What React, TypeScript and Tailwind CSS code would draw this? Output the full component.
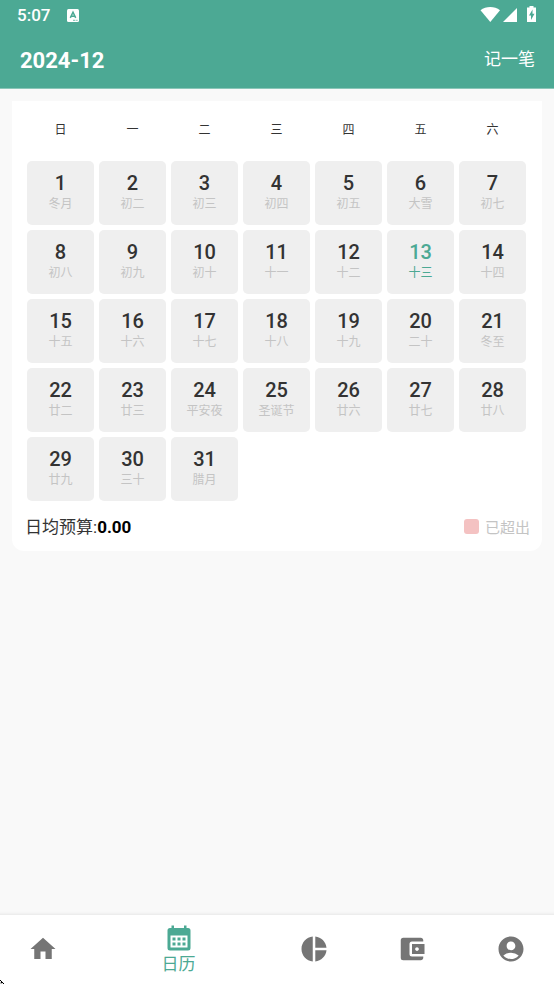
import React from 'react'
import {
  MdAccountBalanceWallet,
  MdAccountCircle,
  MdHome,
  MdPieChart,
} from 'react-icons/md'

const weekdays = ['日', '一', '二', '三', '四', '五', '六']

// Lunar label or holiday for each day of the month
const lunarLabels = [
  '冬月', '初二', '初三', '初四', '初五', '大雪', '初七',
  '初八', '初九', '初十', '十一', '十二', '十三', '十四',
  '十五', '十六', '十七', '十八', '十九', '二十', '冬至',
  '廿二', '廿三', '平安夜', '圣诞节', '廿六', '廿七', '廿八',
  '廿九', '三十', '腊月',
]

const TODAY = 13

const CalendarIcon: React.FC<{ className?: string }> = ({ className }) => (
  <svg className={className} viewBox="0 0 30 30" fill="currentColor" aria-hidden="true">
    <path
      fillRule="evenodd"
      d="M7.500 2.500h2.500V5h10V2.500h2.500V5h1.500a2.500 2.500 0 0 1 2.500 2.500V25a2.500 2.500 0 0 1-2.500 2.500H6A2.500 2.500 0 0 1 3.500 25V7.500A2.500 2.500 0 0 1 6 5h1.500zM6.500 12.500v12h17v-12z"
    />
    <path d="M8.500 14.500h3v3h-3zM13.500 14.500h3v3h-3zM18.500 14.500h3v3h-3zM8.500 19.500h3v3h-3zM13.500 19.500h3v3h-3zM18.500 19.500h3v3h-3z" />
  </svg>
)

const tabs = [
  { name: '首页', icon: MdHome },
  { name: '日历', icon: CalendarIcon },
  { name: '统计', icon: MdPieChart },
  { name: '资产', icon: MdAccountBalanceWallet },
  { name: '我的', icon: MdAccountCircle },
]

const StatusBar: React.FC = () => (
  <div className="flex h-[30px] items-center pl-[17px] pr-[17px]">
    <span className="text-[17px] font-medium leading-[30px]">5:07</span>
    <svg className="ml-[17px] h-[13px] w-3" viewBox="0 0 12 13" aria-hidden="true">
      <rect width="12" height="13" rx="1.5" fill="#fff" />
      <path d="M3.3 8.8 6 3.2l2.7 5.6M4.3 7.2h3.4" fill="none" stroke="#4ca994" strokeWidth="1.5" />
      <path d="M6 11.3h2.4M9.2 11.3h1.4" stroke="#4ca994" strokeWidth="0.8" />
    </svg>
    <svg className="mb-0.5 ml-auto h-4 w-[57px]" viewBox="0 0 57 16" fill="#fff" aria-hidden="true">
      <path d="M0.5 4.2C6-.2 14.500-.2 20 4.200L10.300 16z" />
      <path d="M37 2v14H23z" />
      <path d="M48 1.500h1.500V0h4v1.500H56V16h-9V1.500z" />
      <path d="M52.500 3.500 49 9.500h2v4.500l3.500-6.200h-2z" fill="#4ca994" />
    </svg>
  </div>
)

interface DayCellProps {
  day: number
  label: string
}

const DayCell: React.FC<DayCellProps> = ({ day, label }) => {
  const isToday = day === TODAY

  return (
    <button
      type="button"
      className={`flex h-16 flex-col items-center rounded-[5px] bg-[#efefef] pt-3 ${
        isToday ? 'text-[#4ca994]' : 'text-[#333333]'
      }`}
    >
      <span className="text-xl font-medium leading-5">{day}</span>
      <span className={`text-xs leading-[22px] ${isToday ? '' : 'text-[#c4c4c4]'}`}>{label}</span>
    </button>
  )
}

export default function App() {
  return (
    <div className="flex min-h-screen flex-col overflow-hidden bg-[#f9f9f9] font-[Roboto,'Noto_Sans_CJK_SC',sans-serif]">
      <header className="border-b border-[#8ac6b8] bg-[#4ca994] text-white">
        <StatusBar />
        <div className="flex h-[58px] items-center justify-between pl-5 pr-[19px] pt-0.5">
          <h1 className="text-[22px] font-bold">2024-12</h1>
          <button type="button" className="text-[17px]">
            记一笔
          </button>
        </div>
      </header>

      <main className="flex-1 px-3 pt-3">
        <section className="rounded-b-xl bg-white pl-[15px] pr-4">
          <div className="grid h-[60px] grid-cols-7 gap-[5px] pt-[19px] text-center text-xs leading-5 text-[#333333]">
            {weekdays.map((weekday) => (
              <span key={weekday}>{weekday}</span>
            ))}
          </div>
          <div className="grid grid-cols-7 gap-[5px]">
            {lunarLabels.map((label, i) => (
              <DayCell key={label} day={i + 1} label={label} />
            ))}
          </div>
          <div className="-ml-0.5 -mr-1 flex h-[50px] items-center justify-between pt-1">
            <p className="text-[17px] text-[#333333]">
              日均预算:<b className="text-black">0.00</b>
            </p>
            <p className="flex items-center gap-1.5 text-[15px] text-[#c4c4c4]">
              <span className="mb-[3px] size-[15px] rounded-[3px] bg-[#f4c2c2]" />
              已超出
            </p>
          </div>
        </section>
      </main>

      <nav className="relative -mx-1.5 flex h-[69px] bg-white shadow-[0_-1px_3px_rgba(0,0,0,0.08)]">
        {tabs.map(({ name, icon: Icon }) =>
          name === '日历' ? (
            <button
              key={name}
              type="button"
              aria-current="page"
              className="flex flex-[7] flex-col items-center pt-2 text-[#4ca994]"
            >
              <Icon className="size-[30px]" />
              <span className="text-[17px] leading-[22px]">{name}</span>
            </button>
          ) : (
            <button
              key={name}
              type="button"
              aria-label={name}
              className="flex flex-[4] items-center justify-center pb-px text-[#757575]"
            >
              <Icon className="size-[30px]" />
            </button>
          ),
        )}
        {/* Mouse pointer at the screen edge */}
        <svg className="absolute bottom-0 left-1.5 size-1" viewBox="0 0 4 4" aria-hidden="true">
          <path d="M0 1.500v2.500h3z" fill="#bbb" />
          <path d="M0 0h1v1h1v1h1v1h1v1H3V3H1V1H0z" />
        </svg>
      </nav>
    </div>
  )
}
